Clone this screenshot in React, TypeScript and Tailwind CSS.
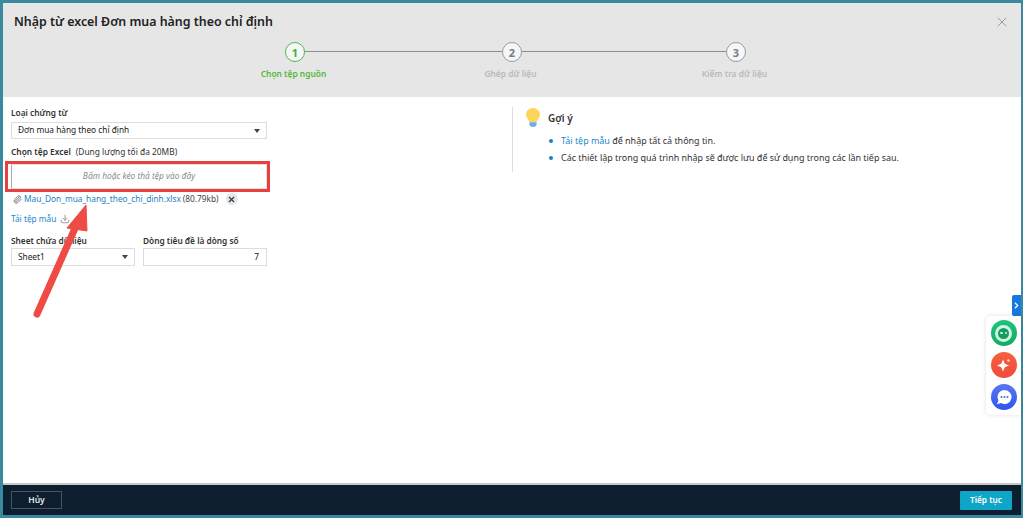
import { ChevronRight, X, Paperclip, Download } from 'lucide-react';

const steps = [
  { n: 1, label: 'Chọn tệp nguồn', active: true, line: 'w-[197px]' },
  { n: 2, label: 'Ghép dữ liệu', active: false, line: 'w-[204px]' },
  { n: 3, label: 'Kiểm tra dữ liệu', active: false, line: '' },
];

function Caret() {
  return <span className="w-0 h-0 border-x-[3px] border-x-transparent border-t-[4px] border-t-[#444]" />;
}

export default function App() {
  return (
    <div className="relative w-[1024px] h-[518px] overflow-hidden bg-[#3a8a9f] border-r border-white pt-[3px] pl-[3px] pr-[2px] pb-[3px] font-['Noto_Sans',sans-serif] text-[#212121]">
      <div className="flex flex-col h-full bg-white">
        {/* Header */}
        <div className="relative h-[94px] shrink-0 bg-[#e6e6e6]">
          <h1 className="pl-[11px] pt-[8px] text-[12.4px] leading-[22px] font-semibold text-[#222]">
            Nhập từ excel Đơn mua hàng theo chỉ định
          </h1>
          <X className="absolute right-[11px] top-[11px] w-[16px] h-[16px] text-[#9a9a9a]" strokeWidth={1.5} />

          {/* Stepper */}
          <div className="flex mt-[9px] pl-[282px]">
            {steps.map((s) => (
              <div key={s.n} className="flex items-start">
                <div className="flex flex-col items-center w-[20px]">
                  <div
                    className={`flex items-center justify-center w-[20px] h-[20px] shrink-0 rounded-full bg-[#f5f6f8] text-[11px] leading-none font-bold ${
                      s.active ? 'border-[1.5px] border-[#4cbb4c] text-[#3cb33c]' : 'border border-[#9a9a9a] text-[#7d7d7d]'
                    }`}
                  >
                    {s.n}
                  </div>
                  <span
                    className={`mt-[5px] mr-[3px] whitespace-nowrap text-[8.4px] leading-[14px] font-semibold ${
                      s.active ? 'text-[#55b83a]' : 'text-[#b9b9b9]'
                    }`}
                  >
                    {s.label}
                  </span>
                </div>
                {s.line && <div className={`mt-[9px] h-px bg-[#8e8e8e] ${s.line}`} />}
              </div>
            ))}
          </div>
        </div>

        {/* Body */}
        <div className="relative flex flex-1 min-h-0 pt-[9px]">
          <div className="w-[256px] ml-[8px] shrink-0">
            <label className="block text-[8.3px] leading-[13px] font-semibold text-[#333]">Loại chứng từ</label>
            <div className="flex items-center justify-between h-[17px] mt-[3px] pl-[6px] pr-[6px] border border-[#dcdcdc] text-[8.3px]">
              <span>Đơn mua hàng theo chỉ định</span>
              <Caret />
            </div>

            <div className="mt-[6px] text-[8.4px] leading-[13px] text-[#333]">
              <span className="font-semibold">Chọn tệp Excel</span>
              <span className="ml-[5px]">(Dung lượng tối đa 20MB)</span>
            </div>

            <div className="-ml-[6px] w-[265px] mt-[3px] h-[31px] border-[3px] border-[#e8403f] pl-[3px]">
              <div className="flex items-center justify-center h-full border border-[#e2e2e2] border-l-[#a8a8a8] text-[8.4px] italic text-[#8a8a8a]">
                Bấm hoặc kéo thả tệp vào đây
              </div>
            </div>

            <div className="flex items-center h-[14px] text-[8.3px]">
              <Paperclip className="w-[9px] h-[9px] ml-[2px] mr-[2px] text-[#777]" strokeWidth={2.5} />
              <span className="text-[#1b7fc4]">Mau_Don_mua_hang_theo_chi_dinh.xlsx</span>
              <span className="ml-[2px] text-[#444]">(80.79kb)</span>
              <span className="flex items-center justify-center w-[12px] h-[12px] ml-[7px] rounded-full bg-[#e4e6ee]">
                <X className="w-[9px] h-[9px] text-[#333]" strokeWidth={3} />
              </span>
            </div>

            <div className="flex items-center mt-[6px] h-[14px] text-[8.3px] text-[#1b8ccc]">
              Tải tệp mẫu
              <Download className="w-[10px] h-[10px] ml-[4px] text-[#888]" strokeWidth={2} />
            </div>

            <div className="flex gap-[8px] mt-[8px]">
              <div className="w-[124px]">
                <label className="block text-[8.3px] leading-[13px] font-semibold text-[#333]">Sheet chứa dữ liệu</label>
                <div className="flex items-center justify-between h-[18px] mt-[1px] pl-[6px] pr-[6px] border border-[#dcdcdc] text-[8.3px]">
                  <span>Sheet1</span>
                  <Caret />
                </div>
              </div>
              <div className="w-[124px]">
                <label className="block text-[8.3px] leading-[13px] font-semibold text-[#333]">Dòng tiêu đề là dòng số</label>
                <div className="flex items-center justify-end h-[18px] mt-[1px] pr-[7px] border border-[#dcdcdc] text-[8.3px]">7</div>
              </div>
            </div>
          </div>

          {/* Hints */}
          <div className="ml-[245px] mt-[1px] h-[65px] border-l border-[#dddddd] pl-[13px] flex items-start">
            <svg width="14" height="19" viewBox="0 0 14 19" className="shrink-0 mt-[1px]">
              <path d="M7 0C3 0 0 3 0 6.600c0 2.600 1.600 4 2.600 5.600.5.800.7 1.500.8 2h7.200c.1-.5.3-1.200.8-2C12.400 10.600 14 9.200 14 6.600 14 3 11 0 7 0z" fill="#fcd45e" />
              <path d="M3.400 14.200h7.200V16.500c0 .8-1 2.500-3.600 2.500s-3.600-1.700-3.600-2.500z" fill="#6aaee6" />
            </svg>
            <div className="ml-[8px]">
              <div className="mt-[4px] text-[10px] leading-[14px] font-semibold text-[#333]">Gợi ý</div>
              <ul className="mt-[7px] text-[8.95px] text-[#333]">
                <li className="flex items-center h-[17px]">
                  <span className="w-[4px] h-[4px] rounded-full bg-[#1b7fc4] mr-[8px] ml-px" />
                  <span><span className="text-[#1b8ccc]">Tải tệp mẫu</span> để nhập tất cả thông tin.</span>
                </li>
                <li className="flex items-center h-[17px]">
                  <span className="w-[4px] h-[4px] rounded-full bg-[#1b7fc4] mr-[8px] ml-px" />
                  <span>Các thiết lập trong quá trình nhập sẽ được lưu để sử dụng trong các lần tiếp sau.</span>
                </li>
              </ul>
            </div>
          </div>

          {/* Side widgets */}
          <div className="absolute right-0 top-[198px] flex items-center justify-center w-[9px] h-[21px] rounded-l-[2px] bg-[#1878e0]">
            <ChevronRight className="w-[9px] h-[9px] text-white" strokeWidth={3.5} />
          </div>
          <div className="absolute right-0 top-[219px] flex flex-col items-center gap-[6px] w-[35px] h-[99px] pt-[4px] rounded-l-[5px] bg-white shadow-[0_0_5px_rgba(0,0,0,0.12)]">
            <span className="flex items-center justify-center w-[26px] h-[26px] rounded-full bg-gradient-to-b from-[#1cc47c] to-[#12ac66]">
              <span className="flex items-center justify-center gap-[2px] w-[17px] h-[17px] rounded-full border-[3px] border-[#d2f3e3] bg-[#149c5e]">
                <span className="w-[2.500px] h-[2.500px] rounded-full bg-[#d2f3e3]" />
                <span className="w-[2.500px] h-[2.500px] rounded-full bg-[#d2f3e3]" />
              </span>
            </span>
            <span className="flex items-center justify-center w-[26px] h-[26px] rounded-full bg-gradient-to-b from-[#f8603e] to-[#f04a3c]">
              <svg width="18" height="18" viewBox="0 0 18 18">
                <path d="M8 3.500 9.800 7.700 14 9.500 9.800 11.300 8 15.500 6.200 11.300 2 9.500 6.200 7.700z" fill="#fff" />
                <circle cx="13.500" cy="4.500" r="1.300" fill="#ffd9d0" />
              </svg>
            </span>
            <span className="flex items-center justify-center w-[26px] h-[26px] rounded-full bg-gradient-to-b from-[#5a76f2] to-[#2f55ee]">
              <svg width="18" height="18" viewBox="0 0 18 18">
                <path d="M9.500 2a7 7 0 1 1-3.400 13.100L1.800 16.200l1.700-3.700A7 7 0 0 1 9.500 2z" fill="#fff" />
                <circle cx="6.500" cy="9" r="1" fill="#4a63ee" />
                <circle cx="9.500" cy="9" r="1" fill="#4a63ee" />
                <circle cx="12.500" cy="9" r="1" fill="#4a63ee" />
              </svg>
            </span>
          </div>
        </div>

        {/* Footer */}
        <div className="flex items-center justify-between h-[32px] shrink-0 pl-[8px] pr-[9px] border-t-2 border-[#c4c6c8] bg-[#0d1f2f]">
          <button className="w-[51px] h-[18px] border border-[#465461] text-[8.5px] font-semibold leading-none text-[#e4e8ec]">Hủy</button>
          <button className="w-[52px] h-[19px] rounded-[1px] bg-[#0ea5c6] text-[8.3px] font-semibold leading-none text-white">Tiếp tục</button>
        </div>
      </div>

      {/* Annotation arrow */}
      <svg width="1024" height="518" viewBox="0 0 1024 518" className="absolute inset-0 pointer-events-none">
        <line x1="37" y1="314" x2="76" y2="226" stroke="#ee4b45" strokeWidth="7" strokeLinecap="round" />
        <path d="M86 205 67 228 87 231z" fill="#ee4b45" stroke="#ee4b45" strokeWidth="1" strokeLinejoin="round" />
      </svg>
    </div>
  );
}
